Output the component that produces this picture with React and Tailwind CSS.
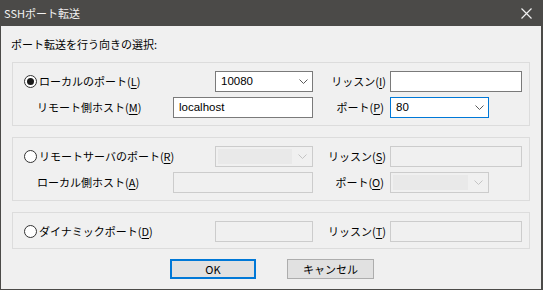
import React from "react";

function Radio({ checked }) {
  return (
    <span className="w-[13px] h-[13px] rounded-full border border-[#333333] bg-white flex items-center justify-center shrink-0">
      {checked && (
        <span className="w-[7px] h-[7px] rounded-full bg-[#1a1a1a]" />
      )}
    </span>
  );
}

function Key({ text, k }) {
  return (
    <span className="whitespace-nowrap">
      {text}(<span className="underline underline-offset-[2px]">{k}</span>)
    </span>
  );
}

function Chevron({ disabled }) {
  return (
    <svg width="9" height="5" viewBox="0 0 9 5" className="shrink-0">
      <path
        d="M0.5 0.5 L4.5 4.5 L8.5 0.5"
        fill="none"
        stroke={disabled ? "#c4c4c4" : "#5a5a5a"}
        strokeWidth="1"
      />
    </svg>
  );
}

function Combo({ value, disabled, focused, w }) {
  if (disabled) {
    return (
      <div
        className={`${w} h-[21px] border border-[#cccccc] bg-[#f0f0f0] flex items-center p-[2px] pr-[5px] gap-[6px]`}
      >
        <div className="flex-1 h-full bg-[#e9e9e9]" />
        <Chevron disabled />
      </div>
    );
  }
  return (
    <div
      className={`${w} h-[21px] border ${
        focused ? "border-[#0078d7]" : "border-[#7a7a7a]"
      } bg-white flex items-center pl-[5px] pr-[4px] font-['Liberation_Sans',sans-serif] text-[11.5px] text-black`}
    >
      <span className="flex-1">{value}</span>
      <Chevron />
    </div>
  );
}

function Field({ value, disabled, w }) {
  return (
    <div
      className={`${w} h-[21px] border ${
        disabled ? "border-[#cccccc] bg-[#f0f0f0]" : "border-[#7a7a7a] bg-white"
      } flex items-center pl-[5px] font-['Liberation_Sans',sans-serif] text-[11.5px] text-black`}
    >
      {value}
    </div>
  );
}

function SideLabel({ children, pr }) {
  return (
    <div className={`w-[77px] flex justify-end ${pr}`}>{children}</div>
  );
}

function Group({ children, last }) {
  return (
    <div
      className={`ml-px w-[518px] border border-[#dcdcdc] pl-[11px] pt-[8px] ${
        last ? "pb-[6px]" : "pb-[7px]"
      } flex flex-col gap-[5px]`}
    >
      {children}
    </div>
  );
}

export default function App() {
  return (
    <div className="w-[543px] h-[290px] bg-[#4b4a48] flex flex-col font-['Noto_Sans_CJK_JP',sans-serif] text-[11px] text-black">
      <div className="h-[26px] shrink-0 flex items-center justify-between pl-[4px] pr-[11px] text-[#f2f2f2]">
        <span>SSHポート転送</span>
        <svg width="11" height="11" viewBox="0 0 11 11">
          <path
            d="M0.5 0.5 L10.5 10.5 M10.5 0.5 L0.5 10.5"
            stroke="#f0f0f0"
            strokeWidth="1.2"
          />
        </svg>
      </div>

      <div className="flex-1 ml-px mr-[2px] mb-px bg-[#f0f0f0] pl-[10px] pt-[10px] flex flex-col">
        <div className="h-[16px] leading-[16px]">ポート転送を行う向きの選択:</div>

        <div className="mt-[10px]">
          <Group>
            <div className="flex items-center h-[21px]">
              <div className="w-[191px] flex items-center gap-[2px]">
                <Radio checked />
                <Key text="ローカルのポート" k="L" />
              </div>
              <Combo value="10080" w="w-[98px]" />
              <SideLabel pr="pr-[4px]">
                <Key text="リッスン" k="I" />
              </SideLabel>
              <Field w="w-[132px]" />
            </div>
            <div className="flex items-center h-[21px]">
              <div className="w-[149px] pl-[13px]">
                <Key text="リモート側ホスト" k="M" />
              </div>
              <Field value="localhost" w="w-[140px]" />
              <SideLabel pr="pr-[6px]">
                <Key text="ポート" k="P" />
              </SideLabel>
              <Combo value="80" focused w="w-[99px]" />
            </div>
          </Group>
        </div>

        <div className="mt-[11px]">
          <Group>
            <div className="flex items-center h-[21px]">
              <div className="w-[191px] flex items-center gap-[2px]">
                <Radio />
                <Key text="リモートサーバのポート" k="R" />
              </div>
              <Combo disabled w="w-[98px]" />
              <SideLabel pr="pr-[4px]">
                <Key text="リッスン" k="S" />
              </SideLabel>
              <Field disabled w="w-[132px]" />
            </div>
            <div className="flex items-center h-[21px]">
              <div className="w-[149px] pl-[13px]">
                <Key text="ローカル側ホスト" k="A" />
              </div>
              <Field disabled w="w-[140px]" />
              <SideLabel pr="pr-[6px]">
                <Key text="ポート" k="O" />
              </SideLabel>
              <Combo disabled w="w-[99px]" />
            </div>
          </Group>
        </div>

        <div className="mt-[11px]">
          <Group last>
            <div className="flex items-center h-[21px]">
              <div className="w-[191px] flex items-center gap-[2px]">
                <Radio />
                <Key text="ダイナミックポート" k="D" />
              </div>
              <Field disabled w="w-[98px]" />
              <SideLabel pr="pr-[4px]">
                <Key text="リッスン" k="T" />
              </SideLabel>
              <Field disabled w="w-[132px]" />
            </div>
          </Group>
        </div>

        <div className="mt-[10px] flex gap-[31px] pl-[159px]">
          <div className="w-[86px] h-[20px] border-2 border-[#0078d7] bg-[#e1e1e1] flex items-center justify-center">
            OK
          </div>
          <div className="w-[87px] h-[20px] border border-[#adadad] bg-[#e1e1e1] flex items-center justify-center">
            キャンセル
          </div>
        </div>
      </div>
    </div>
  );
}
